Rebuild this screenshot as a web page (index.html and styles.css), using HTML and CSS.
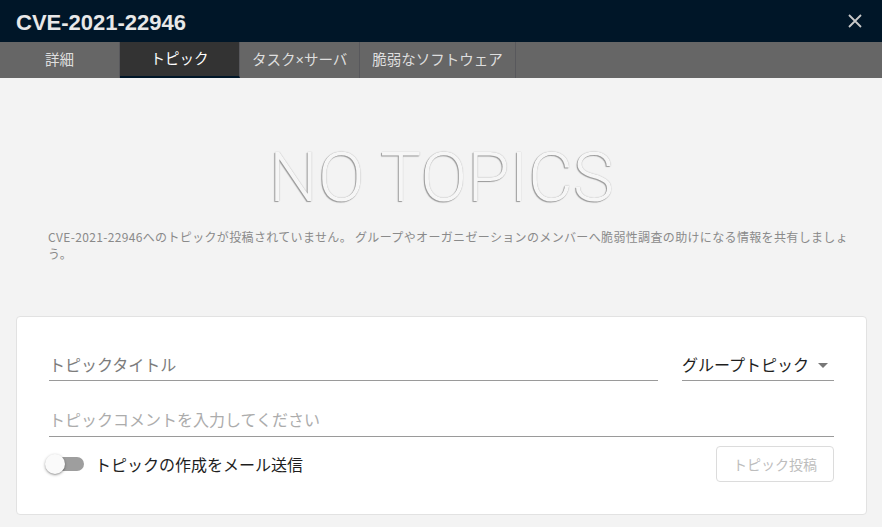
FILE: index.html
```html
<!DOCTYPE html>
<html lang="ja">
<head>
<meta charset="utf-8">
<title>CVE-2021-22946</title>
<link rel="stylesheet" href="styles.css">
</head>
<body>
<div class="app">
  <header class="topbar">
    <h1 class="title">CVE-2021-22946</h1>
    <button class="close" aria-label="閉じる">
      <svg width="14" height="14" viewBox="0 0 14 14"><path d="M1 1 L13 13 M13 1 L1 13" stroke="#c9c9c9" stroke-width="1.8" fill="none"/></svg>
    </button>
  </header>
  <nav class="tabs">
    <div class="tab">詳細</div>
    <div class="tab active">トピック</div>
    <div class="tab">タスク×サーバ</div>
    <div class="tab">脆弱なソフトウェア</div>
  </nav>
  <main class="content">
    <div class="empty">
      <div class="empty-title">NO TOPICS</div>
      <p class="empty-desc">CVE-2021-22946へのトピックが投稿されていません。 グループやオーガニゼーションのメンバーへ脆弱性調査の助けになる情報を共有しましょう。</p>
    </div>
    <section class="card">
      <div class="row">
        <div class="field title-field">トピックタイトル</div>
        <div class="select">
          <span>グループトピック</span>
          <span class="caret"></span>
        </div>
      </div>
      <div class="field comment-field">トピックコメントを入力してください</div>
      <div class="row bottom">
        <label class="toggle">
          <span class="track"><span class="thumb"></span></span>
          <span class="toggle-label">トピックの作成をメール送信</span>
        </label>
        <button class="post">トピック投稿</button>
      </div>
    </section>
  </main>
</div>
</body>
</html>
```
FILE: styles.css
```css
* { box-sizing: border-box; }
html, body {
  margin: 0;
  padding: 0;
  background: #f3f3f3;
  font-family: "Noto Sans CJK JP", "Noto Sans", sans-serif;
}
.app {
  width: 882px;
  height: 527px;
  overflow: hidden;
  display: flex;
  flex-direction: column;
}
.topbar {
  height: 42px;
  background: #001628;
  display: flex;
  align-items: flex-start;
  justify-content: space-between;
  padding: 4px 20px 0 16px;
  flex: none;
}
.title {
  margin: 0;
  font-family: "Liberation Sans", Arial, sans-serif;
  font-weight: bold;
  font-size: 22px;
  line-height: 38px;
  color: #e8e8e8;
}
.close {
  margin-top: 10px;
  padding: 0;
  border: 0;
  background: transparent;
  width: 14px;
  height: 14px;
  display: flex;
}
.tabs {
  height: 36px;
  background: #666;
  display: flex;
  flex: none;
}
.tab {
  min-width: 120px;
  padding: 0 12px;
  height: 36px;
  line-height: 36px;
  text-align: center;
  font-family: "Liberation Sans", "Noto Sans CJK JP", sans-serif;
  font-size: 14.5px;
  color: #dedede;
  border-right: 1px solid #58585c;
}
.tab.active {
  background: #333;
  color: #fff;
  line-height: 34px;
  border-bottom: 2px solid #001628;
}
.content {
  flex: 1;
  padding: 0 15px 0 16px;
}
.empty-title {
  margin-top: 66px;
  font-family: Roboto, "Noto Sans", sans-serif;
  font-weight: 300;
  font-size: 69px;
  line-height: 67px;
  text-align: center;
  color: #f6f6f6;
  text-shadow: -1px 1px 1px rgba(0,0,0,0.35), 0 0 1px rgba(0,0,0,0.35);
}
.empty-desc {
  margin: 17px 0 0;
  padding: 0 17px 0 32px;
  font-size: 12px;
  line-height: 17px;
  letter-spacing: 0.35px;
  color: #8a8a8a;
}
.card {
  margin-top: 54px;
  background: #fff;
  border: 1px solid #e2e2e2;
  border-radius: 4px;
  padding: 27px 32px 32px;
}
.row {
  display: flex;
  gap: 24px;
}
.field {
  border-bottom: 1px solid #9a9a9a;
  font-size: 16px;
}
.title-field {
  flex: 1;
  height: 37px;
  padding-top: 4px;
  line-height: 32px;
  color: #7c7c7c;
}
.select {
  width: 152px;
  height: 37px;
  padding-top: 4px;
  line-height: 32px;
  border-bottom: 1px solid #9a9a9a;
  font-size: 16px;
  color: #1e1e1e;
  display: flex;
  align-items: center;
  justify-content: space-between;
  padding-right: 6px;
}
.caret {
  width: 0;
  height: 0;
  border-left: 5px solid transparent;
  border-right: 5px solid transparent;
  border-top: 5px solid #777;
  margin-top: 3px;
}
.comment-field {
  margin-top: 19px;
  height: 37px;
  padding-top: 2px;
  line-height: 34px;
  color: #acacac;
}
.row.bottom {
  margin-top: 9px;
  align-items: center;
  justify-content: space-between;
}
.toggle {
  display: flex;
  align-items: center;
}
.track {
  position: relative;
  width: 36px;
  height: 14px;
  border-radius: 7px;
  background: #9e9e9e;
  margin-left: -1px;
}
.thumb {
  position: absolute;
  left: -3px;
  top: -3px;
  width: 20px;
  height: 20px;
  border-radius: 50%;
  background: #fafafa;
  box-shadow: 0 1px 3px rgba(0,0,0,0.35), 0 1px 1px rgba(0,0,0,0.12);
}
.toggle-label {
  margin-left: 11px;
  font-size: 16px;
  color: #1e1e1e;
  line-height: 22px;
}
.post {
  width: 118px;
  height: 36px;
  border: 1px solid #dcdcdc;
  border-radius: 4px;
  background: #fff;
  color: #bdbdbd;
  font-family: "Noto Sans CJK JP", sans-serif;
  font-size: 14px;
  padding: 0;
}
```
